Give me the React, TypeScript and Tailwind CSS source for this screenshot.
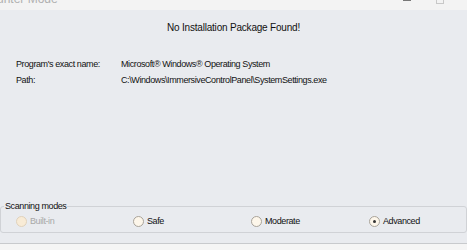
import React from "react";

function Radio({ label, checked, disabled }: { label: string; checked?: boolean; disabled?: boolean }) {
  return (
    <div className="flex items-center gap-[3px]">
      <span
        className={
          "flex h-[11px] w-[11px] items-center justify-center rounded-full border " +
          (disabled ? "border-[#e0d2bc] bg-[#f8ebd6]" : "border-[#a9a39a] bg-[#fdf6ea]")
        }
      >
        {checked && <span className="h-[3px] w-[3px] rounded-full bg-[#333]" />}
      </span>
      <span className={disabled ? "text-[#a8a8a8]" : "text-[#111]"}>{label}</span>
    </div>
  );
}

export default function App() {
  return (
    <div
      className="flex h-[250px] w-[467px] flex-col overflow-hidden bg-[#e9ebef] text-[9px] leading-[14px] tracking-[-0.4px] text-[#111]"
      style={{ fontFamily: '"Liberation Sans", Arial, sans-serif' }}
    >
      <div className="relative h-[10px] bg-[#f3f3f3]">
        <span className="absolute left-[-3px] top-[-8px] text-[12px] tracking-normal text-[#b0b0b0]">unter Mode</span>
        <span className="absolute left-[403px] top-0 h-[1px] w-[8px] bg-[#777]" />
        <span className="absolute left-[436px] top-[-4px] h-[8px] w-[8px] border border-[#c8c8c8]" />
      </div>

      <div className="pt-[11px] text-center text-[10px] tracking-[-0.2px]">No Installation Package Found!</div>

      <div className="mt-[22px] grid grid-cols-[105px_1fr] gap-y-[2px] pl-[16px]">
        <span>Program's exact name:</span>
        <span>Microsoft® Windows® Operating System</span>
        <span>Path:</span>
        <span>C:\Windows\ImmersiveControlPanel\SystemSettings.exe</span>
      </div>

      <div className="flex-1" />

      <div className="relative mb-[10px] rounded-[3px] border border-[#d0d2d6] pt-[7px] pb-[4px]">
        <span className="absolute left-[3px] top-[-8px] bg-[#e9ebef] px-[1px]">Scanning modes</span>
        <div className="grid grid-cols-[117px_118px_118px_1fr] pl-[15px]">
          <Radio label="Built-in" disabled />
          <Radio label="Safe" />
          <Radio label="Moderate" />
          <Radio label="Advanced" checked />
        </div>
      </div>

      <div className="h-[7px] border-t border-[#c8cacd] bg-[#f5f5f5]" />
    </div>
  );
}
